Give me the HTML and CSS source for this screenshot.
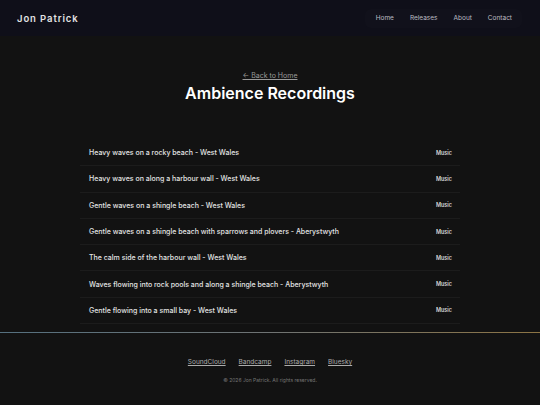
FILE: index.html
```html
<!DOCTYPE html>
<html lang="en">
  <head>
    <meta charset="UTF-8" />
    <meta name="viewport" content="width=device-width, initial-scale=1.0" />
    <title>Ambience Recordings - Jon Patrick</title>
    <link rel="stylesheet" href="styles.css">
  </head>
  <body>
    <header class="header">
      <a class="logo" href="#">Jon Patrick</a>
      <nav class="nav">
        <a href="#">Home</a>
        <a href="#">Releases</a>
        <a href="#">About</a>
        <a href="#">Contact</a>
      </nav>
    </header>

    <main class="main">
      <a class="back" href="#">&larr; Back to Home</a>
      <h1 class="title">Ambience Recordings</h1>

      <ul class="tracks">
        <li><span class="name">Heavy waves on a rocky beach - West Wales</span><span class="tag">Music</span></li>
        <li><span class="name">Heavy waves on along a harbour wall - West Wales</span><span class="tag">Music</span></li>
        <li><span class="name">Gentle waves on a shingle beach - West Wales</span><span class="tag">Music</span></li>
        <li><span class="name">Gentle waves on a shingle beach with sparrows and plovers - Aberystwyth</span><span class="tag">Music</span></li>
        <li><span class="name">The calm side of the harbour wall - West Wales</span><span class="tag">Music</span></li>
        <li><span class="name">Waves flowing into rock pools and along a shingle beach - Aberystwyth</span><span class="tag">Music</span></li>
        <li><span class="name">Gentle flowing into a small bay - West Wales</span><span class="tag">Music</span></li>
      </ul>
    </main>

    <footer class="footer">
      <div class="links">
        <a href="#">SoundCloud</a>
        <a href="#">Bandcamp</a>
        <a href="#">Instagram</a>
        <a href="#">Bluesky</a>
      </div>
      <p class="copy">&copy; 2026 Jon Patrick. All rights reserved.</p>
    </footer>
  </body>
</html>
```

FILE: styles.css
```css
* {
  margin: 0;
  padding: 0;
  box-sizing: border-box;
}

body {
  background-color: #121212;
  color: #e6e6e6;
  font-family: Inter, "Open Sans", sans-serif;
}

a {
  color: inherit;
  text-decoration: none;
}

li {
  list-style-type: none;
}

/* header */
.header {
  height: 36px;
  padding: 0 18px 0 17px;
  display: flex;
  align-items: center;
  justify-content: space-between;
  background-color: #0f0f19;
}

.logo {
  font-size: 9.5px;
  font-weight: 600;
  letter-spacing: 0.9px;
  color: #e2e2e2;
}

.nav {
  display: flex;
  gap: 16px;
  padding: 5px 10px 5px 11px;
  border-radius: 6px;
  background-color: #11111b;
}

.nav a {
  font-size: 6.5px;
  line-height: 9px;
  color: #bdbdc4;
}

/* main */
.main {
  display: flex;
  flex-direction: column;
  align-items: center;
  padding: 35px 0 8px;
}

.back {
  font-size: 7px;
  line-height: 10px;
  color: #9a9a9a;
  text-decoration: underline;
}

.title {
  margin-top: 1px;
  font-size: 16px;
  line-height: 22px;
  font-weight: 600;
  color: #fff;
}

.tracks {
  width: 380px;
  margin-top: 36px;
}

.tracks li {
  height: 26.3px;
  padding: 0 8px 0 9px;
  display: flex;
  align-items: center;
  justify-content: space-between;
  border-bottom: 1px solid #1c1c1c;
}

.name {
  font-size: 7px;
  font-weight: 500;
  color: #e4e4e4;
}

.tag {
  font-size: 5.5px;
  font-weight: 600;
  color: #d6d6d6;
}

/* footer */
.footer {
  border-top: 1px solid transparent;
  border-image: linear-gradient(90deg, #55707f, #6f7373 50%, #8c7444) 1;
  padding-top: 24px;
  display: flex;
  flex-direction: column;
  align-items: center;
}

.links {
  display: flex;
  gap: 13px;
}

.links a {
  font-size: 6.5px;
  line-height: 10px;
  color: #acacac;
  text-decoration: underline;
}

.copy {
  margin-top: 9px;
  font-size: 5px;
  line-height: 8px;
  color: #757575;
}
```
